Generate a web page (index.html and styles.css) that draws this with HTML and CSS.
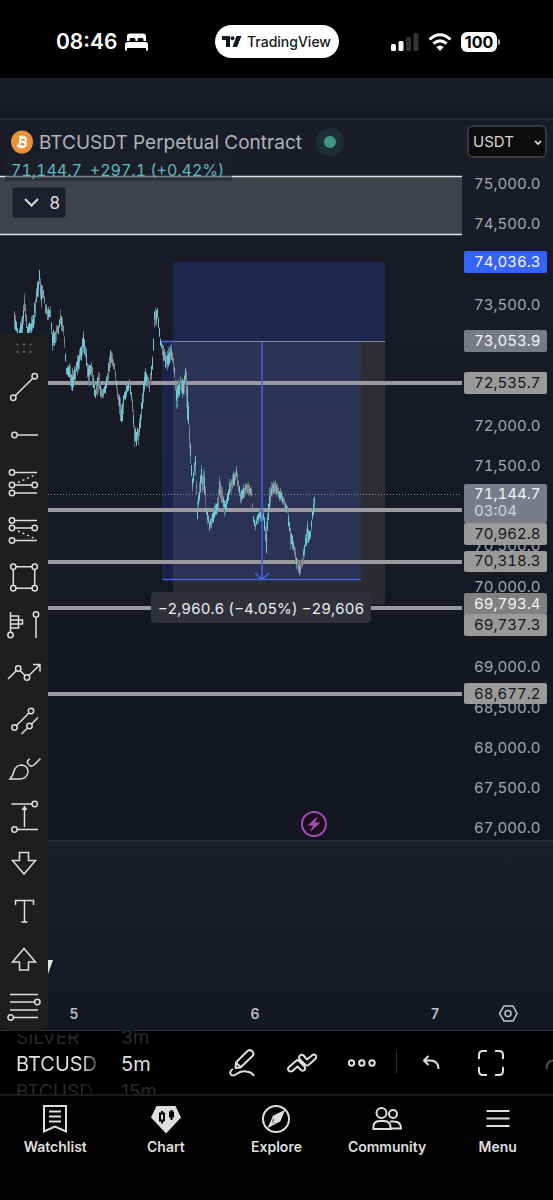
FILE: index.html
```html
<!DOCTYPE html>
<html lang="en">
<head>
    <meta charset="UTF-8">
    <meta name="viewport" content="width=device-width, initial-scale=1">
    <title>BTCUSDT Chart</title>
    <link rel="stylesheet" href="styles.css">
</head>
<body>
    <header class="status">
        <div class="status-time">
            <span>08:46</span>
            <svg width="23" height="18" viewBox="0 0 23 18" fill="#fff">
                <path d="M2 8V3.500Q2 .5 5 .5H18Q21 .5 21 3.500V8H18.500V6.500Q18.500 5 17 5H14Q12.500 5 12.500 6.500V8H10.500V6.500Q10.500 5 9 5H6Q4.500 5 4.500 6.500V8Z"/>
                <path d="M0 17.500V11.500Q0 9 2.500 9H20.500Q23 9 23 11.500V17.500H21V15H2V17.500Z"/>
            </svg>
        </div>
        <div class="island">
            <svg width="20" height="11" viewBox="0 0 20 11" fill="#131722">
                <path d="M0 0H8V11H4V4H0Z"/>
                <circle cx="10.500" cy="2.200" r="2"/>
                <path d="M14.500 0H19.500L15 11H10.500Z"/>
            </svg>
            <span>TradingView</span>
        </div>
        <div class="status-icons">
            <svg width="28" height="18" viewBox="0 0 28 18">
                <rect x="0" y="11" width="5" height="7" rx="1.500" fill="#fff"/>
                <rect x="7.500" y="8" width="5" height="10" rx="1.500" fill="#fff"/>
                <rect x="15" y="4" width="5" height="14" rx="1.500" fill="#333"/>
                <rect x="22.500" y="0" width="5" height="18" rx="1.500" fill="#333"/>
            </svg>
            <svg width="24" height="18" viewBox="0 0 24 18" fill="none" stroke="#fff" stroke-width="3">
                <path d="M1.500 6.500Q12-3 22.500 6.500"/>
                <path d="M5.500 10.700Q12 5 18.500 10.700"/>
                <path d="M12 18L8.300 14Q12 10.800 15.700 14Z" fill="#fff" stroke="none"/>
            </svg>
            <div class="battery">100</div>
        </div>
    </header>

    <main class="workspace">
        <div class="upper-pane"></div>

        <section class="chart">
            <div class="plot">
                <svg class="plot-svg" width="100%" height="720">
                    <!-- supply zone -->
                    <rect x="0" y="57" width="100%" height="57" fill="#40424a"/>
                    <path d="M0 56.500H2000M0 114.500H2000" stroke="#e2e2e6" stroke-width="1.500"/>

                    <!-- short position + measured range -->
                    <rect x="173" y="142" width="212" height="80" fill="#2962ff" fill-opacity=".19"/>
                    <rect x="173" y="222" width="212" height="262" fill="#96947d" fill-opacity=".17"/>
                    <rect x="162" y="222" width="199" height="238" fill="#3052f0" fill-opacity=".19"/>

                    <g stroke="#9c9a9f" stroke-width="4">
                        <line x1="0" x2="100%" y1="263" y2="263"/>
                        <line x1="0" x2="100%" y1="390" y2="390"/>
                        <line x1="0" x2="100%" y1="442" y2="442"/>
                        <line x1="0" x2="100%" y1="488" y2="488"/>
                        <line x1="0" x2="100%" y1="574" y2="574"/>
                    </g>
                    <line x1="0" x2="100%" y1="374.500" y2="374.500" stroke="#8a8c98" stroke-dasharray="1 2"/>

                    <g id="candles"></g>

                    <path d="M173 221.500H385" stroke="#85879c"/>
                    <path d="M162 221.500H173M162 459.500H361M262 222V459M255 453L262 459.500L269 453" stroke="#4862e8" stroke-width="1.500" fill="none"/>

                    <rect x="151" y="472" width="220" height="31" rx="4" fill="#2f3038"/>
                    <text class="measure" x="261" y="494" text-anchor="middle">−2,960.6 (−4.05%) −29,606</text>

                    <circle cx="314" cy="704" r="12" fill="#1b0f20" stroke="#a04db4" stroke-width="2"/>
                    <path d="M317 697.500L308.500 705H314L311 710.500L319.500 703H314Z" fill="#a04db4" stroke="#a04db4"/>
                </svg>

                <div class="legend">
                    <div class="legend-title">
                        <svg width="22" height="24" viewBox="0 0 22 24">
                            <ellipse cx="11" cy="12" rx="11" ry="11.500" fill="#e8923a"/>
                            <g transform="rotate(13 11 12)" fill="none" stroke="#fff" stroke-width="2">
                                <path d="M7 7.500H12Q14.500 7.500 14.500 9.600Q14.500 11.800 12 11.800H8.500H12.500Q15.300 11.800 15.300 14Q15.300 16.500 12.500 16.500H7M9 7.500V16.500"/>
                                <path d="M9.500 5.500V7M12 5.500V7M9.500 17V18.500M12 17V18.500" stroke-width="1.500"/>
                            </g>
                        </svg>
                        <span>BTCUSDT Perpetual Contract</span>
                        <i class="market-dot"></i>
                    </div>
                    <div class="legend-values"><span>71,144.7</span><span>+297.1 (+0.42%)</span></div>
                    <button class="collapse" aria-label="Show 8 indicators">
                        <svg width="15" height="9" viewBox="0 0 15 9" fill="none" stroke="#dcdce2" stroke-width="2"><path d="M1 1L7.500 7.500L14 1"/></svg>
                        <span>8</span>
                    </button>
                </div>
            </div>

            <div class="axis">
                <svg class="axis-svg" width="91" height="720">
                    <g class="ticks">
                        <text x="12" y="69">75,000.0</text>
                        <text x="12" y="109">74,500.0</text>
                        <text x="12" y="190">73,500.0</text>
                        <text x="12" y="311">72,000.0</text>
                        <text x="12" y="351">71,500.0</text>
                        <text x="12" y="431">70,500.0</text>
                        <text x="12" y="472">70,000.0</text>
                        <text x="12" y="552">69,000.0</text>
                        <text x="12" y="593">68,500.0</text>
                        <text x="12" y="633">68,000.0</text>
                        <text x="12" y="673">67,500.0</text>
                        <text x="12" y="713">67,000.0</text>
                    </g>
                    <g class="tags">
                        <rect x="2" y="131" width="83" height="22" rx="2" fill="#3563fa"/>
                        <rect x="2" y="210" width="83" height="22" rx="2" fill="#787b86"/>
                        <rect x="2" y="252" width="83" height="22" rx="2" fill="#9a9a9a"/>
                        <rect x="2" y="364" width="83" height="39" rx="2" fill="#787c8a"/>
                        <rect x="2" y="403" width="83" height="22" rx="2" fill="#9a9a9a"/>
                        <rect x="2" y="431" width="83" height="21" rx="2" fill="#9a9a9a"/>
                        <rect x="2" y="473" width="83" height="22" rx="2" fill="#808080"/>
                        <rect x="2" y="494" width="83" height="22" rx="2" fill="#9a9a9a"/>
                        <rect x="2" y="563" width="83" height="21" rx="2" fill="#9a9a9a"/>
                        <text x="12" y="147">74,036.3</text>
                        <text x="12" y="226">73,053.9</text>
                        <text class="dark" x="12" y="268">72,535.7</text>
                        <text x="12" y="379">71,144.7</text>
                        <text class="soft" x="12" y="396">03:04</text>
                        <text class="dark" x="12" y="419">70,962.8</text>
                        <text class="dark" x="12" y="446">70,318.3</text>
                        <text x="12" y="489">69,793.4</text>
                        <text class="dark" x="12" y="510">69,737.3</text>
                        <text class="dark" x="12" y="579">68,677.2</text>
                    </g>
                </svg>
                <div class="currency">
                    <select aria-label="Currency"><option>USDT</option></select>
                    <svg width="8" height="5" viewBox="0 0 8 5" fill="none" stroke="#e6e6e6" stroke-width="1.700"><path d="M1 1L4 4L7 1"/></svg>
                </div>
            </div>
        </section>

        <section class="time-pane">
            <svg width="100%" height="190">
                <path d="M36 120H53L48 134H30Z" fill="#e4e4e4"/>
                <g class="days">
                    <text x="74" y="179">5</text>
                    <text x="255" y="179">6</text>
                    <text x="435" y="179">7</text>
                </g>
                <g fill="none" stroke="#c4c6cf" stroke-width="1.500">
                    <path d="M504 166H513L517 173.500L513 181H504L499.500 173.500Z"/>
                    <circle cx="508" cy="173.500" r="3"/>
                </g>
            </svg>
        </section>

        <aside class="tools">
            <svg class="grip" width="16" height="11" viewBox="0 0 16 11" fill="#5a5a5a">
                <circle cx="1.500" cy="1.500" r="1.200"/><circle cx="8" cy="1.500" r="1.200"/><circle cx="14.500" cy="1.500" r="1.200"/>
                <circle cx="1.500" cy="9" r="1.200"/><circle cx="8" cy="9" r="1.200"/><circle cx="14.500" cy="9" r="1.200"/>
            </svg>
            <button aria-label="Trend line"><svg viewBox="0 0 34 34"><path d="M8.200 25.800L25.800 8.200"/><circle cx="6.300" cy="27.700" r="2.700"/><circle cx="27.700" cy="6.300" r="2.700"/></svg></button>
            <button aria-label="Horizontal ray"><svg viewBox="0 0 34 34"><path d="M10.200 18H31"/><circle cx="7.500" cy="18" r="2.700"/></svg></button>
            <button aria-label="Long position"><svg viewBox="0 0 34 34"><path d="M7.700 7.500H30M7.700 20H25M7.700 28H30"/><circle cx="5" cy="7.500" r="2.700"/><circle cx="5" cy="20" r="2.700"/><circle cx="5" cy="28" r="2.700"/><circle cx="27.700" cy="20" r="2.700"/><path d="M11 17.500L29 9.500" stroke-dasharray="2 3"/></svg></button>
            <button aria-label="Short position"><svg viewBox="0 0 34 34"><path d="M7.700 7.500H30M7.700 15H25M7.700 27.500H30"/><circle cx="5" cy="7.500" r="2.700"/><circle cx="5" cy="15" r="2.700"/><circle cx="5" cy="27.500" r="2.700"/><circle cx="27.700" cy="15" r="2.700"/><path d="M11 18L29 26" stroke-dasharray="2 3"/></svg></button>
            <button aria-label="Rectangle"><svg viewBox="0 0 34 34"><path d="M9 6.800H25M9 28.200H25M6.300 9.500V25.500M27.700 9.500V25.500"/><circle cx="6.300" cy="6.800" r="2.700"/><circle cx="27.700" cy="6.800" r="2.700"/><circle cx="6.300" cy="28.200" r="2.700"/><circle cx="27.700" cy="28.200" r="2.700"/></svg></button>
            <button aria-label="Volume profile"><svg viewBox="0 0 34 34"><path d="M3.500 4V24M3.500 8H11.500V20H3.500M3.500 12H15.500V16H3.500M29 9.500V30"/><circle cx="3.500" cy="27" r="2.700"/><circle cx="29" cy="6.500" r="2.700"/></svg></button>
            <button aria-label="Path"><svg viewBox="0 0 34 34"><path d="M1 23L9.300 14.700M13 14.500L18 19.500M22 19.500L32.500 9M26 8.500H33V15.500"/><circle cx="11.200" cy="12.500" r="2.700"/><circle cx="20" cy="21.500" r="2.700"/></svg></button>
            <button aria-label="Parallel channel"><svg viewBox="0 0 34 34"><path d="M9.500 22.500L22 10M14.500 31L20.500 25M24.500 21L31 14.500"/><circle cx="7.500" cy="24.500" r="2.700"/><circle cx="24" cy="8" r="2.700"/><circle cx="22.500" cy="23" r="2.700"/></svg></button>
            <button aria-label="Brush"><svg viewBox="0 0 34 34"><path d="M3 28Q6 25 7 20Q9 14 15 14Q21 15 21 21Q20 28 12 28ZM23 8Q20 9 20.500 12Q23 17 27 14L33.500 7.500"/></svg></button>
            <button aria-label="Price range"><svg viewBox="0 0 34 34"><path d="M4.500 5H25M10.200 30.500H31M17.500 28V9"/><path d="M14.500 11H20.500L17.500 6.500Z" fill="#dedede" stroke="none"/><circle cx="27.700" cy="5" r="2.700"/><circle cx="7.500" cy="30.500" r="2.700"/></svg></button>
            <button aria-label="Arrow down"><svg viewBox="0 0 34 34"><path d="M12.500 6.500H21.500V14.500H28.500L17 28L5.500 14.500H12.500Z"/></svg></button>
            <button aria-label="Text"><svg viewBox="0 0 34 34"><path d="M8.500 11V6.500H26.500V11M17.500 6.500V28M14.500 28H20.500"/></svg></button>
            <button aria-label="Arrow up"><svg viewBox="0 0 34 34"><path d="M12.500 28H21.500V20H28.500L17 6.500L5.500 20H12.500Z"/></svg></button>
            <button aria-label="Fib retracement"><svg viewBox="0 0 34 34"><path d="M3 5.500H31M3 13H27.500M3 21H31M6.500 28.500H31"/><circle cx="30.300" cy="13" r="2.700"/><circle cx="3.700" cy="28.500" r="2.700"/></svg></button>
        </aside>
    </main>

    <div class="actions">
        <div class="wheels">
            <div class="wheel wheel-symbol">
                <span>SILVER</span>
                <button>BTCUSD</button>
                <span>BTCUSD</span>
            </div>
            <div class="wheel">
                <span>3m</span>
                <button>5m</button>
                <span>15m</span>
            </div>
        </div>
        <button class="action" aria-label="Draw"><svg width="28" height="30" viewBox="0 0 28 30"><path d="M7.500 20L8 14.500L19.500 3Q22 1 24.500 3.500Q26.500 6 24.500 8L12.500 19.500ZM8 14.500L12.500 19"/><path d="M5 21Q1.500 23 2.500 26Q4.500 29 8.500 26Q13 22.500 18 23.500Q24 24 26 28"/></svg></button>
        <button class="action" aria-label="Indicators"><svg width="30" height="20" viewBox="0 0 30 20"><path d="M1.500 14.500L9.500 7.500Q10.500 6.500 12 8L17.500 13.500Q19 15.500 17.500 17Q15.500 18.500 14 17L10.500 13.500L5.500 18Q3 19 1.500 17.500Q.5 16 1.500 14.500ZM12.500 6Q11.500 4 13 2.500Q15 1 16.500 2.500L20 6.500L25.500 2Q27.500 1 28.800 2.500Q30 4 28.500 5.800L21.500 12Q20 13 18.500 12Z"/></svg></button>
        <button class="action" aria-label="More"><svg width="28" height="10" viewBox="0 0 28 10"><circle cx="3.500" cy="5" r="2.700"/><circle cx="13.800" cy="5" r="2.700"/><circle cx="24" cy="5" r="2.700"/></svg></button>
        <i class="divider"></i>
        <button class="action" aria-label="Undo"><svg width="18" height="16" viewBox="0 0 18 16"><path d="M6.500 1L2 5.500L6.500 10M2 5.500H8Q16.500 5.500 16.500 14"/></svg></button>
        <button class="action" aria-label="Fullscreen"><svg width="28" height="28" viewBox="0 0 28 28"><path d="M2 10V6Q2 2 6 2H10M18 2H22Q26 2 26 6V10M26 18V22Q26 26 22 26H18M10 26H6Q2 26 2 22V18"/></svg></button>
        <button class="action faded" aria-label="Redo"><svg width="18" height="16" viewBox="0 0 18 16"><path d="M11.500 1L16 5.500L11.500 10M16 5.500H12Q4.500 5.500 4.500 14"/></svg></button>
    </div>

    <nav class="nav">
        <a href="#"><svg width="30" height="30" viewBox="0 0 30 30"><path d="M4 2H26V27.500L15 22.500L4 27.500ZM9 7.500H21M9 12.500H21M9 17.500H21"/></svg><span>Watchlist</span></a>
        <a href="#"><svg width="30" height="30" viewBox="0 0 30 30"><path d="M5.500 2H24.500L30 13.500L15 29.500L0 13.500Z" fill="#dedede" stroke="none"/><g stroke="#000" stroke-width="2"><path d="M9 9.500H13V16.500H9ZM11 7V9.500M11 16.500V19.500M20.500 6V16"/><path d="M19 8.500H22V12.500H19Z" fill="#000"/></g></svg><span>Chart</span></a>
        <a href="#"><svg width="30" height="30" viewBox="0 0 30 30"><circle cx="15" cy="15" r="13"/><path d="M22.500 7.500L18.500 17L8 22.500L12.500 12.500ZM8 22L14 16" stroke-width="1.500"/><path d="M22.500 7.500L18.500 17L14 18L12.500 12.500Z" fill="#dedede" stroke-width="1.500"/></svg><span>Explore</span></a>
        <a href="#"><svg width="30" height="30" viewBox="0 0 30 30"><circle cx="9.500" cy="9" r="5"/><circle cx="21" cy="10" r="4"/><path d="M1.500 25Q.5 17 8 17H12Q19 17 18.500 25ZM18 17.500H22Q29 17.500 29 24.500H18.500"/></svg><span>Community</span></a>
        <a href="#"><svg width="30" height="30" viewBox="0 0 30 30"><path d="M3.500 7H26.500M3.500 14.500H26.500M3.500 22H26.500"/></svg><span>Menu</span></a>
    </nav>

    <script src="chart.js"></script>
</body>
</html>
```
FILE: styles.css
```css
* { box-sizing: border-box; }
body {
    margin: 0;
    min-height: 100vh;
    display: flex;
    flex-direction: column;
    background: #000;
    color: #dedede;
    font-family: Inter, "Liberation Sans", sans-serif;
    overflow-x: hidden;
}
button {
    margin: 0;
    padding: 0;
    border: none;
    background: none;
    color: inherit;
    font: inherit;
    cursor: pointer;
}
svg { display: block; flex: none; }

/* status bar */
.status {
    height: 78px;
    padding: 5px 56px 0;
    display: grid;
    grid-template-columns: 1fr 124px 1fr;
    align-items: center;
    color: #fff;
}
.status-time {
    display: flex;
    align-items: center;
    gap: 8px;
    font-size: 21px;
    font-weight: 600;
}
.island {
    height: 33px;
    border-radius: 17px;
    background: #fff;
    color: #131722;
    display: flex;
    align-items: center;
    justify-content: center;
    gap: 5px;
    font-size: 14px;
    font-weight: 500;
}
.status-icons {
    display: flex;
    align-items: center;
    justify-content: flex-end;
    gap: 9px;
}
.battery {
    position: relative;
    width: 36px;
    height: 20px;
    border-radius: 6px;
    background: #fff;
    color: #000;
    font-size: 16px;
    font-weight: 700;
    line-height: 20px;
    text-align: center;
}
.battery::after {
    content: "";
    position: absolute;
    right: -3px;
    top: 7px;
    width: 2px;
    height: 6px;
    border-radius: 0 2px 2px 0;
    background: #aaa;
}

/* chart */
.workspace { position: relative; }
.upper-pane {
    height: 42px;
    background: linear-gradient(#1b1d28, #161823);
    border-bottom: 2px solid #262832;
}
.chart {
    display: grid;
    grid-template-columns: 1fr 91px;
    background: linear-gradient(#1a1c27, #131621);
}
.plot, .axis { position: relative; }
.plot { overflow: hidden; }
.measure {
    fill: #ececf0;
    font-size: 15px;
    font-variant-numeric: tabular-nums;
}
.ticks, .tags {
    font-size: 15px;
    font-variant-numeric: tabular-nums;
}
.ticks { fill: #a4a6b0; }
.tags { fill: #f4f4f6; }
.tags .dark { fill: #161616; }
.tags .soft { fill: #d2d4dc; }

.legend {
    position: absolute;
    top: 8px;
    left: 5px;
    display: flex;
    flex-direction: column;
    align-items: flex-start;
}
.legend-title {
    height: 28px;
    padding-left: 6px;
    display: flex;
    align-items: center;
    gap: 6px;
    color: #b0b2bb;
    font-size: 19px;
    white-space: nowrap;
}
.market-dot {
    flex: none;
    width: 28px;
    height: 28px;
    margin-left: 8px;
    border: 8px solid #1d2f36;
    border-radius: 50%;
    background: #44967f;
}
.legend-values {
    height: 25px;
    padding: 4px 8px 0 6px;
    display: flex;
    gap: 8px;
    background: rgba(29, 31, 42, .5);
    color: #5cb9c3;
    font-size: 16px;
    font-variant-numeric: tabular-nums;
    line-height: 20px;
}
.collapse {
    width: 54px;
    height: 31px;
    margin: 6px 0 0 7px;
    padding: 0 5px 0 11px;
    display: flex;
    align-items: center;
    justify-content: space-between;
    border: 1px solid #2d2f3b;
    border-radius: 3px;
    background: #1d1f2c;
    font-size: 17px;
}

.currency {
    position: absolute;
    top: 5px;
    left: 5px;
}
.currency select {
    width: 80px;
    height: 33px;
    padding: 0 0 0 4px;
    appearance: none;
    border: 2px solid #38393c;
    border-radius: 6px;
    background: #0c0c0d;
    color: #d6d6d6;
    font: 15px Inter, "Liberation Sans", sans-serif;
}
.currency svg {
    position: absolute;
    right: 5px;
    top: 15px;
    pointer-events: none;
}

.time-pane {
    background: linear-gradient(#1b1d28, #141620);
    border-top: 2px solid #272933;
    border-bottom: 1px solid #2b2d36;
}
.time-pane svg { margin-top: -2px; }
.days {
    fill: #bcbec8;
    font-size: 14px;
    font-weight: 600;
    text-anchor: middle;
}

/* favourite drawing tools, floats over both panes */
.tools {
    position: absolute;
    left: 0;
    top: 255px;
    bottom: 1px;
    width: 48px;
    padding-top: 10px;
    display: flex;
    flex-direction: column;
    align-items: center;
    border-radius: 4px 4px 8px 8px;
    background: #1e1e1e;
}
.grip { margin-bottom: 9px; }
.tools button {
    flex: 1;
    display: flex;
    align-items: center;
}
.tools button svg {
    width: 34px;
    height: 34px;
    overflow: visible;
    fill: none;
    stroke: #dedede;
    stroke-width: 1.500;
}

/* quick actions */
.actions {
    height: 65px;
    display: flex;
    overflow: hidden;
    border-bottom: 2px solid #1b1b1b;
}
.wheels {
    flex: none;
    width: 212px;
    padding: 3px 0 0 16px;
    display: flex;
    gap: 21px;
}
.wheel {
    display: flex;
    flex-direction: column;
    justify-content: center;
    align-items: flex-start;
    line-height: 27px;
}
.wheel span {
    color: #2a2a2a;
    font-size: 19px;
}
.wheel button { font-size: 20px; }
.wheel-symbol {
    width: 84px;
    -webkit-mask-image: linear-gradient(to right, #000 66px, transparent 88px);
    mask-image: linear-gradient(to right, #000 66px, transparent 88px);
}
.action {
    flex: none;
    width: 60px;
    padding-top: 1px;
    display: flex;
    align-items: center;
    justify-content: center;
}
.action svg {
    fill: none;
    stroke: #dedede;
    stroke-width: 2;
    stroke-linejoin: round;
}
.faded { opacity: .35; }
.divider {
    flex: none;
    width: 1px;
    height: 23px;
    margin: auto 4px;
    background: #2c2c2c;
}

/* bottom navigation */
.nav {
    flex: 1;
    padding-top: 8px;
    display: grid;
    grid-template-columns: repeat(5, 1fr);
    background: #030303;
}
.nav a {
    display: flex;
    flex-direction: column;
    align-items: center;
    gap: 5px;
    color: inherit;
    font-size: 14px;
    font-weight: 600;
    line-height: 16px;
    text-decoration: none;
}
.nav svg {
    fill: none;
    stroke: #dedede;
    stroke-width: 2;
}
```
FILE: chart.js
```js
// [x, high, low] swings of the 5m series, in plot pixels
const swings = [
    [14, 186, 212], [18, 208, 225], [22, 190, 218], [24, 170, 195], [27, 200, 222], [32, 194, 214],
    [35, 172, 200], [37, 160, 182], [39, 144, 172], [41, 160, 188], [43, 164, 182], [45, 180, 198],
    [48, 185, 205], [50, 185, 202], [52, 206, 233], [55, 205, 225], [58, 202, 216], [60, 187, 210],
    [63, 202, 216], [66, 244, 258], [69, 240, 258], [71, 248, 280], [75, 242, 262], [79, 228, 250],
    [83, 208, 240], [85, 220, 240], [88, 242, 270], [91, 238, 262], [95, 264, 283], [98, 248, 275],
    [102, 268, 282], [106, 254, 272], [110, 222, 250], [114, 240, 252], [117, 266, 280], [121, 278, 315],
    [124, 268, 284], [129, 255, 272], [132, 276, 292], [134, 302, 328], [138, 305, 326], [141, 278, 300],
    [145, 242, 266], [149, 258, 274], [152, 235, 255], [154, 188, 212], [157, 184, 206], [160, 214, 226],
    [163, 225, 244], [167, 230, 253], [171, 222, 243], [174, 242, 258], [176, 264, 292], [180, 252, 274],
    [183, 254, 280], [185, 244, 268], [187, 246, 310], [189, 304, 330], [192, 354, 372], [195, 332, 358],
    [197, 380, 404], [201, 342, 372], [204, 348, 378], [206, 382, 400], [209, 398, 416], [213, 385, 406],
    [217, 378, 400], [219, 356, 380], [225, 378, 400], [229, 358, 378], [236, 345, 362], [240, 368, 386],
    [246, 358, 376], [251, 364, 378], [253, 393, 406], [255, 398, 412], [259, 388, 402], [263, 390, 406],
    [266, 400, 438], [269, 366, 390], [274, 356, 376], [278, 364, 380], [283, 374, 386], [287, 384, 396],
    [290, 404, 430], [293, 416, 432], [296, 432, 450], [299, 442, 458], [302, 434, 448], [307, 400, 424],
    [310, 408, 424], [313, 376, 396], [315, 373, 382]
];

const layer = document.getElementById("candles");
let seed = 7;
function rand() {
    seed = (seed * 16807) % 2147483647;
    return seed / 2147483647;
}

function addBar(x, y1, y2, color) {
    const bar = document.createElementNS("http://www.w3.org/2000/svg", "line");
    bar.setAttribute("x1", x + 0.5);
    bar.setAttribute("x2", x + 0.5);
    bar.setAttribute("y1", y1);
    bar.setAttribute("y2", y2);
    bar.setAttribute("stroke", color);
    layer.appendChild(bar);
}

for (let i = 0; i < swings.length - 1; i++) {
    const [x1, h1, l1] = swings[i];
    const [x2, h2, l2] = swings[i + 1];
    const falling = h2 > h1;
    for (let x = x1; x < x2; x++) {
        const t = (x - x1) / (x2 - x1);
        const high = h1 + (h2 - h1) * t;
        const low = l1 + (l2 - l1) * t;
        const range = low - high;
        const up = rand() > (falling ? 0.5 : 0.2);
        // wick over the full swing, body somewhere inside it
        addBar(x, high + rand() * range * 0.4, low - rand() * range * 0.4, up ? "#4f8793" : "#6b6771");
        const top = high + (0.15 + rand() * 0.25) * range;
        addBar(x, top, top + (0.3 + rand() * 0.3) * range, up ? "#6fc6d6" : "#8d8790");
    }
}
```
